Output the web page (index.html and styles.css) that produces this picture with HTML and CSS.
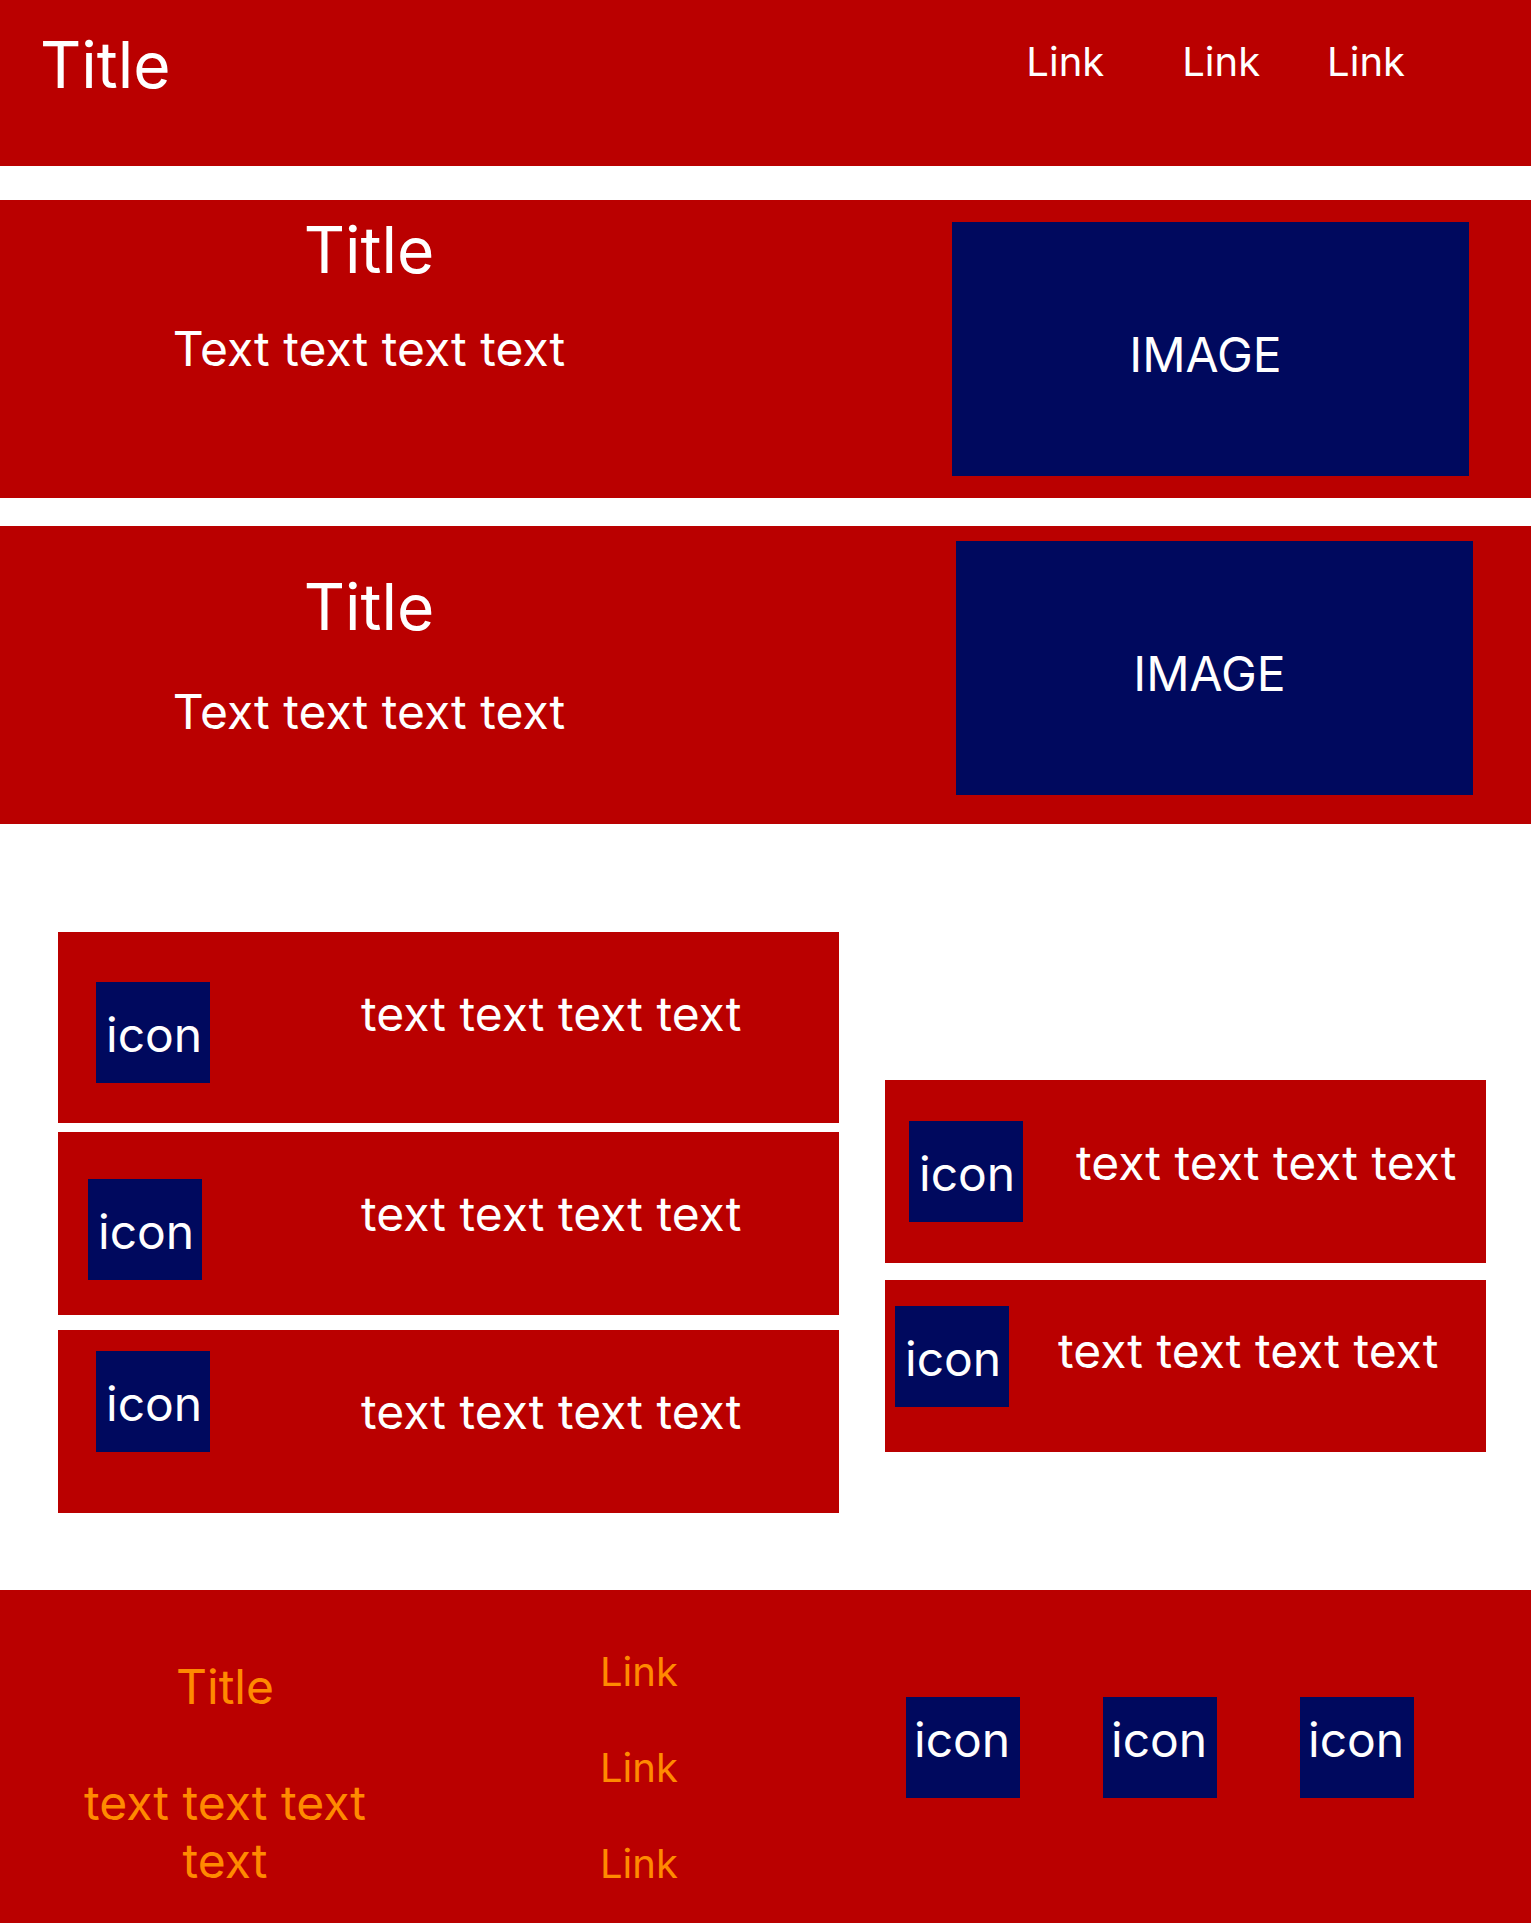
FILE: index.html
```html
<!DOCTYPE html>
<html lang="en">
<head>
  <meta charset="utf-8">
  <meta name="viewport" content="width=device-width, initial-scale=1">
  <title>Title</title>
  <link rel="stylesheet" href="styles.css">
</head>
<body>
  <header class="site-header">
    <h1 class="title">Title</h1>
    <nav class="site-nav">
      <a class="link link-lead" href="#first">Link</a>
      <a class="link" href="#second">Link</a>
      <a class="link" href="#third">Link</a>
    </nav>
  </header>

  <main>
    <section class="hero hero-primary" id="first">
      <div class="hero-copy">
        <h2 class="title">Title</h2>
        <p class="text">Text text text text</p>
      </div>
      <div class="image">IMAGE</div>
    </section>

    <section class="hero hero-secondary" id="second">
      <div class="hero-copy">
        <h2 class="title">Title</h2>
        <p class="text">Text text text text</p>
      </div>
      <div class="image">IMAGE</div>
    </section>

    <section class="features" id="third">
      <div class="feature-column">
        <article class="card card-tall">
          <div class="icon">icon</div>
          <p class="text">text text text text</p>
        </article>
        <article class="card card-outset">
          <div class="icon">icon</div>
          <p class="text">text text text text</p>
        </article>
        <article class="card card-raised">
          <div class="icon">icon</div>
          <p class="text">text text text text</p>
        </article>
      </div>
      <div class="feature-column feature-column-side">
        <article class="card card-side">
          <div class="icon">icon</div>
          <p class="text">text text text text</p>
        </article>
        <article class="card card-side-last">
          <div class="icon">icon</div>
          <p class="text">text text text text</p>
        </article>
      </div>
    </section>
  </main>

  <footer class="site-footer">
    <div class="footer-copy">
      <h2 class="text">Title</h2>
      <p class="text">text text text text</p>
    </div>
    <nav class="footer-nav">
      <a class="link" href="#first">Link</a>
      <a class="link" href="#second">Link</a>
      <a class="link" href="#third">Link</a>
    </nav>
    <div class="footer-icons">
      <div class="icon">icon</div>
      <div class="icon">icon</div>
      <div class="icon">icon</div>
    </div>
  </footer>
</body>
</html>
```
FILE: styles.css
```css
:root {
  --red: #ba0000;
  --navy: #00095e;
  --orange: #ff8a00;
}

* {
  box-sizing: border-box;
}

body {
  margin: 0;
  background: #fff;
  color: #fff;
  font-family: Inter, "Liberation Sans", sans-serif;
  font-size: 48px;
  line-height: 58px;
}

h1,
h2,
p {
  margin: 0;
  font-weight: 400;
}

.title {
  font-size: 64px;
  line-height: 77px;
}

.text {
  font-size: 48px;
  line-height: 58px;
}

.link {
  color: inherit;
  font-size: 40px;
  line-height: 48px;
  text-decoration: none;
}

/* Header */
.site-header {
  display: flex;
  justify-content: space-between;
  align-items: flex-start;
  min-height: 166px;
  padding: 26px 126px 0 40px;
  background: var(--red);
}

.site-nav {
  display: flex;
  gap: 67px;
  padding-top: 12px;
}

.link-lead {
  margin-right: 11px;
}

/* Heroes */
.hero {
  display: grid;
  grid-template-columns: 738fr 793fr;
  background: var(--red);
}

.hero-copy {
  display: flex;
  flex-direction: column;
  align-items: center;
}

.hero-primary {
  margin-top: 34px;
  padding: 11px 0 22px;
}

.hero-primary .hero-copy {
  gap: 32px;
}

.hero-primary .image {
  margin: 11px 62px 0 0;
}

.hero-secondary {
  margin-top: 28px;
  padding: 15px 0 29px;
}

.hero-secondary .hero-copy {
  gap: 38px;
  padding-top: 27px;
}

.hero-secondary .image {
  margin-right: 58px;
}

.image {
  justify-self: end;
  width: 517px;
  height: 254px;
  padding: 104px 10px 0 0;
  background: var(--navy);
  text-align: center;
}

.icon {
  flex: none;
  width: 114px;
  height: 101px;
  padding: 24px 0 0 10px;
  background: var(--navy);
}

/* Feature cards */
.features {
  display: grid;
  grid-template-columns: 781fr 601fr;
  gap: 46px;
  padding: 108px 45px 77px 58px;
}

.feature-column {
  display: flex;
  flex-direction: column;
}

.feature-column-side {
  gap: 17px;
  padding-top: 148px;
}

.card {
  display: grid;
  grid-template-columns: 265px 1fr;
  align-items: start;
  min-height: 183px;
  padding: 52px 0 0 38px;
  background: var(--red);
}

.card-tall {
  min-height: 191px;
  margin-bottom: 9px;
  padding-top: 50px;
}

.card-tall .text {
  padding-top: 3px;
}

.card-outset {
  grid-template-columns: 273px 1fr;
  margin-bottom: 15px;
  padding: 47px 0 0 30px;
}

.card-outset .text {
  padding-top: 6px;
}

.card-raised {
  padding-top: 21px;
}

.card-raised .text {
  padding-top: 32px;
}

.card-side {
  grid-template-columns: 167px 1fr;
  padding: 41px 0 0 24px;
}

.card-side .text {
  padding-top: 13px;
}

.card-side-last {
  grid-template-columns: 163px 1fr;
  min-height: 172px;
  padding: 26px 0 0 10px;
}

.card-side-last .text {
  padding-top: 16px;
}

/* Footer */
.site-footer {
  display: grid;
  grid-template-columns: 450fr 456fr 625fr;
  min-height: 333px;
  padding-top: 58px;
  background: var(--red);
}

.footer-copy {
  display: flex;
  flex-direction: column;
  align-items: center;
  gap: 58px;
  padding-top: 10px;
  color: var(--orange);
  text-align: center;
}

.footer-copy .text {
  max-width: 320px;
}

.footer-nav {
  display: flex;
  flex-direction: column;
  align-items: flex-start;
  gap: 48px;
  padding-left: 150px;
  color: var(--orange);
}

.footer-icons {
  display: flex;
  gap: 83px;
  padding-top: 49px;
}

.footer-icons .icon {
  padding: 14px 0 0 8px;
}
```
